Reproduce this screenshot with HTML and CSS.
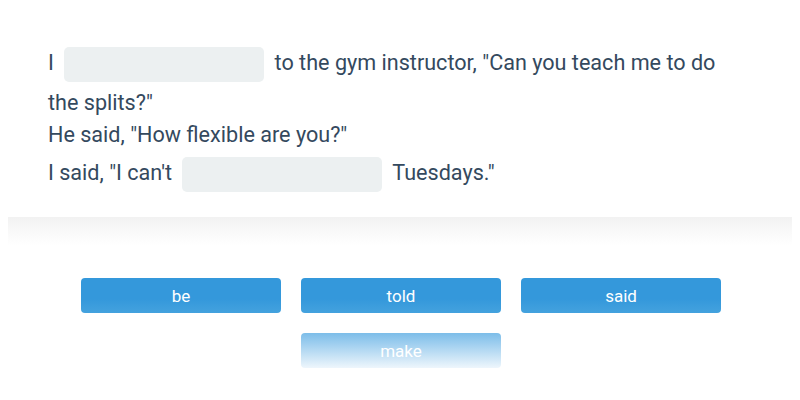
FILE: index.html
```html
<!DOCTYPE html>
<html>
<head>
<meta charset="utf-8">
<link rel="stylesheet" href="styles.css">
</head>
<body>
<div class="card">
  <p class="para">I <span class="blank"></span> to the gym instructor, "Can you teach me to do the splits?"</p>
  <p class="para">He said, "How flexible are you?"</p>
  <p class="para">I said, "I can't <span class="blank"></span> Tuesdays."</p>
</div>
<div class="shade"></div>
<div class="choices">
  <button class="choice">be</button>
  <button class="choice">told</button>
  <button class="choice">said</button>
  <button class="choice fading">make</button>
</div>
</body>
</html>
```
FILE: styles.css
```css
html, body {
  margin: 0;
  padding: 0;
  background: #ffffff;
}
body {
  padding: 8px;
  font-family: Roboto, "Liberation Sans", sans-serif;
  color: #34495e;
}
.card {
  background: #ffffff;
  padding: 33px 64px 20px 40px;
}
.para {
  margin: 0;
  font-size: 21.6px;
  line-height: 32px;
}
.blank {
  display: inline-block;
  width: 200px;
  height: 35px;
  margin: 6px 5px 5px 5px;
  vertical-align: middle;
  background: #ecf0f1;
  border-radius: 5px;
}
.shade {
  height: 28px;
  background: linear-gradient(#f2f2f2, rgba(255,255,255,0));
}
.choices {
  display: flex;
  flex-wrap: wrap;
  justify-content: center;
  gap: 20px;
  width: 660px;
  padding-left: 2px;
  margin: 33px auto 0 auto;
}
.choice {
  width: 200px;
  height: 35px;
  border: none;
  border-radius: 4px;
  background: linear-gradient(#3498db 60%, #44a2de);
  color: #ffffff;
  font-family: Roboto, "Liberation Sans", sans-serif;
  font-size: 17px;
  padding: 0;
}
.choice.fading {
  background: linear-gradient(#7cbde9, #eef6fc);
}
```
